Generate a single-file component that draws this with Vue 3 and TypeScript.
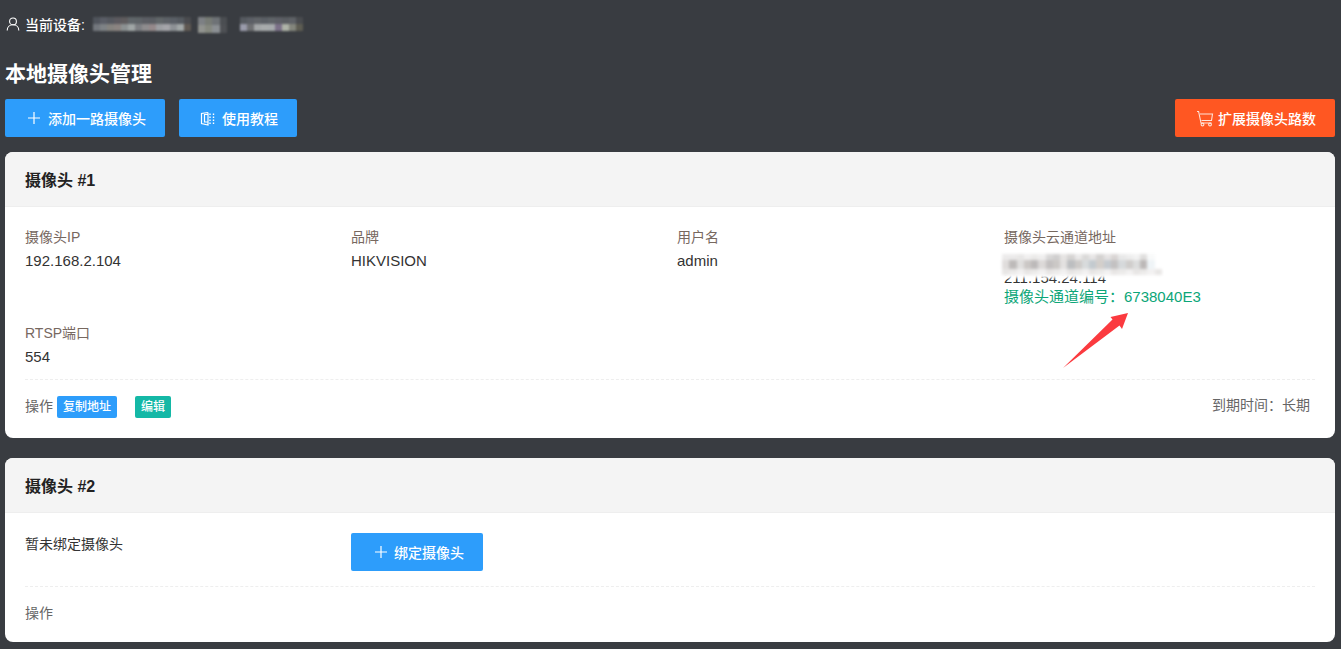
<script setup lang="ts">
const darkTop = ['#50545c', '#5a5d66', '#55585f', '#5c5a5f', '#5f5c5e', '#60666a', '#5f6468', '#5c5e64', '#5a5d63', '#616669', '#5d6167', '#5a5f66', '#555a60', '#4a4b4f']
const darkBottom = ['#73777d', '#7e8286', '#85837f', '#8b8481', '#8c9192', '#a0a6a6', '#7d7f83', '#8e8c8e', '#94888a', '#9d9fa3', '#a5a5aa', '#8d9195', '#a2a8a8', '#5f5852']
const midTop = ['#7d8084', '#777b75', '#6e7276', '#4b4e52']
const midBottom = ['#91938f', '#85887f', '#8b8f93', '#4e5054']
const rightTop = ['#565a60', '#5c5f66', '#606368', '#5b5f65', '#5f6368', '#5d5f66', '#5a5d62', '#5e6166', '#494b4f']
const rightBottom = ['#9a9bab', '#6f7073', '#a3a6a8', '#a8abac', '#a6aaac', '#7b7088', '#aeb3a8', '#83857c', '#5d5c52']
const addr1 = ['#ecebeb', '#ecebeb', '#e8e7e6', '#f1f0f0', '#ecebea', '#f0efef', '#d8d7d7', '#d0cfcf', '#e6e4e3', '#d6d4d3', '#ebeaea', '#dad9d8', '#e8e6e6', '#d4d2d1', '#e6e4e4', '#d9d5d4', '#e9e9e9', '#eeeeee', '#f3f3f3', '#dfdedd', '#f9fafa', '#ffffff']
const addr2 = ['#e0dddc', '#bdbab9', '#e0dfde', '#cbc7c5', '#bcb9b9', '#dcd9d8', '#c3c0c0', '#cbc8c6', '#e3e1e0', '#bcbec0', '#cdcac8', '#d8dbdc', '#c3cacf', '#d3cfcb', '#c5cacf', '#c3c1c1', '#d6d9db', '#cfcdcb', '#dcdddd', '#bcb8b7', '#eff4f7', '#ffffff']
const addr3 = addr2.map((_, i) => (i % 3 === 0 ? '#e8e6e5' : i % 3 === 1 ? '#ecebea' : '#f2f1f1'))
</script>

<template>
  <div class="page">
    <div class="device">
      <svg class="user" viewBox="0 0 14 14" width="14" height="14" fill="none" stroke="#fff" stroke-width="1.1">
        <circle cx="7" cy="4.4" r="3.4" />
        <path d="M1.2 13.4c0-3.3 2.4-5.6 5.8-5.6s5.8 2.3 5.8 5.6" />
      </svg>
      <b>当前设备:</b>
      <span class="mosaic m1">
        <span class="row"><i v-for="(c, i) in darkTop" :key="i" :style="{ background: c }"></i></span>
        <span class="row"><i v-for="(c, i) in darkBottom" :key="i" :style="{ background: c }"></i></span>
      </span>
      <span class="mosaic m2">
        <span class="row"><i v-for="(c, i) in midTop" :key="i" :style="{ background: c }"></i></span>
        <span class="row"><i v-for="(c, i) in midBottom" :key="i" :style="{ background: c }"></i></span>
      </span>
      <span class="mosaic m3">
        <span class="row"><i v-for="(c, i) in rightTop" :key="i" :style="{ background: c }"></i></span>
        <span class="row"><i v-for="(c, i) in rightBottom" :key="i" :style="{ background: c }"></i></span>
      </span>
    </div>
    <h1>本地摄像头管理</h1>
    <div class="toolbar">
      <button class="btn blue add">
        <svg viewBox="0 0 14 14" width="14" height="14" stroke="#fff" stroke-width="1.2"><path d="M7 1v12M1 7h12" /></svg>
        添加一路摄像头
      </button>
      <button class="btn blue guide">
        <svg viewBox="0 0 15 15" width="15" height="15" fill="none" stroke="#fff" stroke-width="1.2">
          <path d="M8 1.5 1.5 2.5v10l6.5 1.5V1.5M8 3.5H4.5v7.5H8" />
          <path d="M10 2.5v1.5M10 5.5V7M10 8.5V10M10 11.5V13M13.5 2.5v1.5M13.5 5.5V7M13.5 8.5V10M13.5 11.5V13" stroke-width="1.4" />
        </svg>
        使用教程
      </button>
      <button class="btn orange">
        <svg viewBox="0 0 18 18" width="18" height="18" fill="none" stroke="#ffe3d8" stroke-width="1.1">
          <path d="M1 2.5h1.6l2.4 11.5h10.5M4 5h12.5l-1 6.5H5.5" />
          <circle cx="6.5" cy="15.5" r="1.4" />
          <circle cx="14" cy="15.5" r="1.4" />
        </svg>
        扩展摄像头路数
      </button>
    </div>

    <section class="card">
      <header>摄像头 #1</header>
      <div class="body">
        <div class="grid">
          <div class="field"><label>摄像头IP</label><p>192.168.2.104</p></div>
          <div class="field"><label>品牌</label><p>HIKVISION</p></div>
          <div class="field"><label>用户名</label><p>admin</p></div>
          <div class="field cloud">
            <label>摄像头云通道地址</label>
            <p class="address">
              <span class="cover">
                <span class="row"><i v-for="(c, i) in addr1" :key="i" :style="{ background: c }"></i></span>
                <span class="row main"><i v-for="(c, i) in addr2" :key="i" :style="{ background: c }"></i></span>
                <span class="row"><i v-for="(c, i) in addr3" :key="i" :style="{ background: c }"></i></span>
                <span class="row blank"></span>
              </span>
              211.154.24.114
            </p>
            <p class="channel">摄像头通道编号：6738040E3</p>
            <svg class="arrow" viewBox="0 0 70 60" width="70" height="60">
              <path d="M0 58 L49.5 9.5 L47.5 7 L65 3 L59 19 L56.5 15.5 Z" fill="#fb3a3f" />
            </svg>
          </div>
          <div class="field rtsp"><label>RTSP端口</label><p>554</p></div>
        </div>
        <div class="foot">
          <span class="op">操作</span>
          <span class="tag blue">复制地址</span>
          <span class="tag teal">编辑</span>
          <span class="expire">到期时间：长期</span>
        </div>
      </div>
    </section>

    <section class="card second">
      <header>摄像头 #2</header>
      <div class="body">
        <div class="grid bind">
          <div class="field"><p class="none">暂未绑定摄像头</p></div>
          <div class="field">
            <button class="btn blue bind-btn">
              <svg viewBox="0 0 14 14" width="14" height="14" stroke="#fff" stroke-width="1.2"><path d="M7 1v12M1 7h12" /></svg>
              绑定摄像头
            </button>
          </div>
        </div>
        <div class="foot plain"><span class="op">操作</span></div>
      </div>
    </section>
  </div>
</template>

<style>
html, body { margin: 0; background: #393c41; }
</style>

<style scoped>
.page {
  box-sizing: border-box;
  width: 1341px;
  height: 649px;
  overflow: hidden;
  padding: 14px 6px 0 5px;
  background: #393c41;
  color: #222;
  font-family: "Liberation Sans", "Noto Sans CJK SC", sans-serif;
  font-size: 14px;
}
.device {
  display: flex;
  align-items: center;
  height: 20px;
  color: #fff;
  font-size: 14px;
}
.device b { margin: 0 8px 0 5px; font-weight: 500; }
.user { margin-left: 1px; }
.mosaic { display: inline-flex; flex-direction: column; filter: blur(1px); }
.row { display: flex; flex: 1; }
.row i { display: block; flex: 1; }
.m1 { width: 98px; height: 14px; }
.m2 { width: 29px; height: 16px; margin-left: 7px; margin-top: 2px; }
.m3 { width: 63px; height: 14px; margin-left: 13px; }
h1 {
  margin: 18px 0 0;
  color: #fff;
  font-size: 21px;
  line-height: 44px;
  height: 47px;
  font-weight: 700;
}
.toolbar { display: flex; gap: 14px; height: 38px; }
.btn {
  display: inline-flex;
  align-items: center;
  justify-content: flex-start;
  gap: 7px;
  height: 38px;
  border: 0;
  border-radius: 2px;
  padding: 0 0 0 22px;
  color: #fff;
  font: 500 14px "Liberation Sans", "Noto Sans CJK SC", sans-serif;
}
.blue { background: #2d9dfb; }
.add { width: 160px; }
.guide { width: 118px; padding-left: 21px; }
.orange { width: 160px; margin-left: auto; padding-left: 21px; gap: 4px; background: #ff5722; }
.card {
  margin-top: 15px;
  border-radius: 8px;
  background: #fff;
  overflow: hidden;
}
.card.second { margin-top: 20px; }
header {
  height: 54px;
  line-height: 58px;
  padding: 0 20px;
  background: #f4f4f4;
  border-bottom: 1px solid #eee;
  font-size: 16px;
  font-weight: 700;
  color: #222;
}
.body { padding: 19px 20px 0; }
.grid {
  display: grid;
  grid-template-columns: 326px 326px 327px 1fr;
}
.field { height: 96px; position: relative; }
.field label { display: block; color: #77685f; line-height: 22px; }
.field p { margin: 0; line-height: 26px; color: #333; font-size: 15px; }
.field p.none { font-size: 14px; line-height: 24px; }
.rtsp { height: 57px; }
.cloud { z-index: 1; }
.address { position: relative; line-height: 18px !important; padding-top: 21px; height: 18px; }
.cover {
  position: absolute;
  left: -2px;
  top: 6px;
  width: 160px;
  height: 24px;
  display: flex;
  flex-direction: column;
  filter: blur(1.5px);
}
.cover .main { flex: 1.4; }
.cover .blank { flex: 0.5; background: #fff; }
.channel { color: #0ca678 !important; line-height: 20px !important; margin-top: 0; }
.arrow { position: absolute; left: 59px; top: 84px; }
.foot {
  display: flex;
  align-items: center;
  height: 53px;
  padding-bottom: 5px;
  border-top: 1px dashed #eee;
  color: #666;
}
.foot.plain { height: 54px; padding-bottom: 1px; }
.op { margin-right: 4px; color: #666; margin-top: -4px; }
.tag {
  height: 22px;
  line-height: 22px;
  padding: 0 6px;
  border-radius: 2px;
  color: #fff;
  font-size: 12px;
  font-weight: 500;
}
.teal { margin-left: 18px; background: #14b8a6; }
.expire { margin-left: auto; padding-right: 5px; color: #666; margin-top: -6px; }
.bind { grid-template-columns: 326px 1fr; }
.bind .field { height: 54px; }
.bind-btn { width: 132px; margin-top: 1px; padding-left: 23px; gap: 6px; }
</style>
